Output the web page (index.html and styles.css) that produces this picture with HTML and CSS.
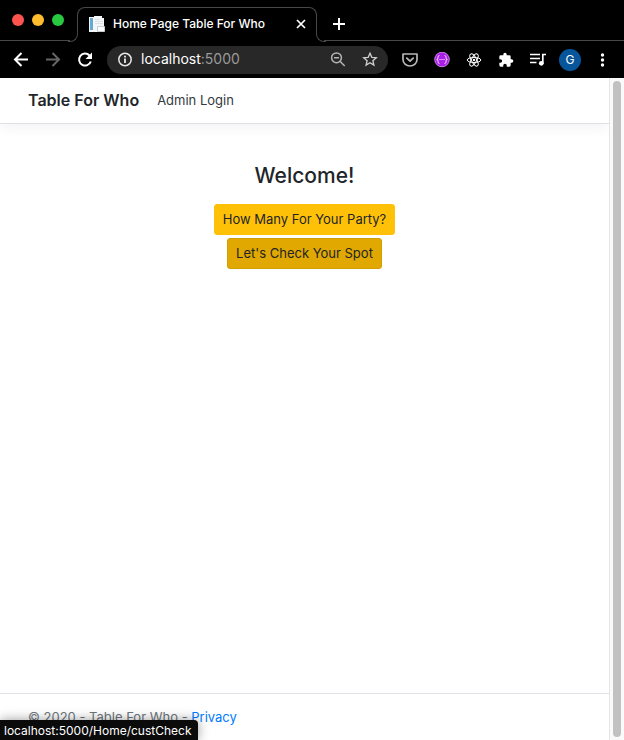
FILE: index.html
```html
<!DOCTYPE html>
<html lang="en">
<head>
<meta charset="utf-8">
<meta name="viewport" content="width=device-width, initial-scale=1">
<title>Home Page Table For Who</title>
<link rel="stylesheet" href="styles.css">
</head>
<body>
<div class="browser">
  <div class="tabstrip">
    <div class="window-controls">
      <button class="light light-red" aria-label="Close window"></button>
      <button class="light light-yellow" aria-label="Minimize window"></button>
      <button class="light light-green" aria-label="Zoom window"></button>
    </div>
    <div class="tab">
      <svg class="favicon" viewBox="0 0 16 16" aria-hidden="true">
        <path fill="#f4f6f7" d="M0 1h5V0h8v2h2v14H0z"/>
        <path fill="#65a9d4" d="M1 2h3v12H1z"/>
        <path fill="#dfe2e4" d="M6 3h5v1H6zM6 5h8v1H6zM6 7h8v1H6z"/>
        <path fill="#fff" stroke="#c9cdd1" d="M8.500 10.500h7v5h-7z"/>
      </svg>
      <span class="tab-title">Home Page Table For Who</span>
      <button class="tab-close" aria-label="Close tab">
        <svg class="icon-small" viewBox="0 0 12 12"><path fill="none" stroke="#fff" stroke-width="1.700" d="M2 2l8 8M10 2l-8 8"/></svg>
      </button>
    </div>
    <div class="tabstrip-rest">
      <button class="new-tab" aria-label="New tab">
        <svg class="icon-small" viewBox="0 0 12 12"><path stroke="#fff" stroke-width="2" d="M6 0v12M0 6h12"/></svg>
      </button>
    </div>
  </div>

  <div class="toolbar">
    <button class="tool" aria-label="Back"><svg class="icon" viewBox="0 0 16 16"><path fill="none" stroke="#fff" stroke-width="2" d="M15 7.500H2M8.500 1L2 7.500 8.500 14"/></svg></button>
    <button class="tool" aria-label="Forward"><svg class="icon" viewBox="0 0 16 16"><path fill="none" stroke="#666" stroke-width="2" d="M1 7.500h13M7.500 1L14 7.500 7.500 14"/></svg></button>
    <button class="tool" aria-label="Reload"><svg class="icon" viewBox="0 0 16 16"><path fill="none" stroke="#fff" stroke-width="2" d="M13.800 9.500A6 6 0 1 1 12.500 3.500"/><path fill="#fff" d="M15 .5V7H8.500z"/></svg></button>
    <div class="address">
      <svg class="icon" viewBox="0 0 16 16" aria-hidden="true"><circle cx="8" cy="7.500" r="6.200" fill="none" stroke="#e8e8e8" stroke-width="1.500"/><path stroke="#e8e8e8" stroke-width="1.800" d="M8 6.500V11M8 3.700v1.800"/></svg>
      <div class="url"><span class="host">localhost</span>:5000</div>
      <button class="tool" aria-label="Zoom level"><svg class="icon" viewBox="0 0 16 16"><circle cx="6.500" cy="5.800" r="4.900" fill="none" stroke="#b4b4b4" stroke-width="1.500"/><path fill="none" stroke="#b4b4b4" stroke-width="1.500" d="M10 9.300l4.700 4.700M4 5.800h5"/></svg></button>
      <button class="tool" aria-label="Bookmark this page"><svg class="icon" viewBox="0 0 16 16"><path fill="none" stroke="#d0d0d0" stroke-width="1.300" d="M8 1.200l1.800 4.100 4.500.4-3.400 3 1 4.400L8 10.800l-3.900 2.300 1-4.400-3.400-3 4.500-.4z"/></svg></button>
    </div>
    <button class="tool" aria-label="Save to Pocket"><svg class="icon" viewBox="0 0 16 16"><path fill="none" stroke="#b7b7b7" stroke-width="1.700" stroke-linejoin="round" d="M1 2h14v5.500a7 6.500 0 0 1-14 0z"/><path fill="none" stroke="#b7b7b7" stroke-width="1.800" stroke-linecap="round" stroke-linejoin="round" d="M4.800 6.200L8 9.200l3.200-3"/></svg></button>
    <button class="tool" aria-label="JSON viewer"><svg class="icon" viewBox="0 0 16 16"><circle cx="8" cy="7.500" r="7.500" fill="#a91de8"/><circle cx="8" cy="7.500" r="7.300" fill="none" stroke="#e6c4f5" stroke-width=".6"/><path fill="none" stroke="#fff" stroke-width=".8" d="M5.500 3.500Q4 3.500 4 5v1Q4 7.500 2.700 7.500 4 7.500 4 9v1q0 1.500 1.500 1.500M10.500 3.500Q12 3.500 12 5v1q0 1.500 1.300 1.500Q12 7.500 12 9v1q0 1.500-1.500 1.500"/><path fill="#fff" d="M5.500 7h1v1h-1zM7.500 7h1v1h-1zM9.500 7h1v1h-1z"/></svg></button>
    <button class="tool" aria-label="React developer tools"><svg class="icon" viewBox="0 0 16 16"><g fill="none" stroke="#fff" stroke-width="1"><ellipse cx="8" cy="8" rx="6.800" ry="2.600"/><ellipse cx="8" cy="8" rx="6.800" ry="2.600" transform="rotate(60 8 8)"/><ellipse cx="8" cy="8" rx="6.800" ry="2.600" transform="rotate(120 8 8)"/></g><circle cx="8" cy="8" r="1.200" fill="#fff"/></svg></button>
    <button class="tool" aria-label="Extensions"><svg class="icon" viewBox="0 0 24 24"><path fill="#fff" d="M20.500 11H19V7a2 2 0 0 0-2-2h-4V3.500a2.500 2.500 0 0 0-5 0V5H4a2 2 0 0 0-2 2v3.800h1.500a2.700 2.700 0 0 1 0 5.400H2V20a2 2 0 0 0 2 2h3.800v-1.500a2.700 2.700 0 0 1 5.400 0V22H17a2 2 0 0 0 2-2v-4h1.500a2.500 2.500 0 0 0 0-5z"/></svg></button>
    <button class="tool" aria-label="Media controls"><svg class="icon" viewBox="0 0 16 16"><path fill="none" stroke="#fff" stroke-width="1.700" d="M0 2.500h10M0 6.500h10M0 10.500h6.500M12.800 11.500v-9H16"/><circle cx="11.300" cy="11.300" r="2.400" fill="#fff"/></svg></button>
    <button class="tool" aria-label="Profile"><span class="avatar">G</span></button>
    <button class="tool" aria-label="Menu"><svg class="icon" viewBox="0 0 16 16"><g fill="#fff"><circle cx="8.500" cy="3" r="1.700"/><circle cx="8.500" cy="8" r="1.700"/><circle cx="8.500" cy="13" r="1.700"/></g></svg></button>
  </div>

  <div class="viewport">
    <div class="page">
      <header class="navbar">
        <a class="brand" href="#">Table For Who</a>
        <a class="nav-link" href="#">Admin Login</a>
      </header>
      <main class="content">
        <h1 class="heading">Welcome!</h1>
        <button class="action">How Many For Your Party?</button>
        <button class="action action-hover">Let's Check Your Spot</button>
      </main>
      <footer class="footer">© 2020 - Table For Who - <a class="footer-link" href="#">Privacy</a></footer>
    </div>
    <div class="scroll-track"><div class="scroll-thumb"></div></div>
  </div>
  <div class="status">localhost:5000/Home/custCheck</div>
</div>
</body>
</html>
```

FILE: styles.css
```css
* {
  box-sizing: border-box;
}

body {
  margin: 0;
  background: #000;
  font-family: Inter, "Liberation Sans", sans-serif;
  color: #212529;
}

button {
  margin: 0;
  padding: 0;
  border: 0;
  background: none;
  font: inherit;
  color: inherit;
}

a {
  text-decoration: none;
}

svg {
  display: block;
}

.browser {
  position: relative;
  display: flex;
  flex-direction: column;
  min-height: 100vh;
  overflow: hidden;
}

.tabstrip {
  display: flex;
  height: 41px;
}

.window-controls {
  display: flex;
  gap: 8px;
  width: 70px;
  padding: 14px 0 0 12px;
  border-bottom: 1px solid #484848;
}

.light {
  width: 12px;
  height: 12px;
  border-radius: 50%;
}

.light-red {
  background: #ff5350;
}

.light-yellow {
  background: #ffbd2e;
}

.light-green {
  background: #28c941;
}

.tab {
  position: relative;
  display: flex;
  align-items: center;
  width: 240px;
  height: 26px;
  margin: 7px 7px 0;
  padding: 7px 9px 0 11px;
  border: 1px solid #484848;
  border-bottom: 0;
  border-radius: 8px 8px 0 0;
}

.tab::before,
.tab::after {
  content: "";
  position: absolute;
  top: 25px;
  width: 9px;
  height: 8px;
  border-bottom: 1px solid #484848;
}

.tab::before {
  right: 238px;
  border-right: 1px solid #484848;
  border-bottom-right-radius: 8px;
}

.tab::after {
  left: 238px;
  border-left: 1px solid #484848;
  border-bottom-left-radius: 8px;
}

.favicon {
  width: 16px;
  height: 16px;
}

.tab-title {
  flex: 1;
  margin-left: 8px;
  font-size: 12px;
  font-weight: 500;
  line-height: 16px;
  color: #fff;
  white-space: nowrap;
}

.icon-small {
  width: 12px;
  height: 12px;
}

.tabstrip-rest {
  display: flex;
  align-items: flex-start;
  flex: 1;
  padding: 18px 0 0 9px;
  border-bottom: 1px solid #484848;
}

.toolbar {
  display: flex;
  align-items: center;
  height: 37px;
  padding: 0 6px 0 5px;
}

.tool {
  display: flex;
  flex: none;
  align-items: center;
  justify-content: center;
  width: 32px;
  height: 28px;
}

.icon {
  width: 16px;
  height: 16px;
}

.address {
  display: flex;
  flex: 1;
  align-items: center;
  height: 28px;
  margin: 0 6px;
  padding: 0 2px 0 10px;
  border-radius: 14px;
  background: #282828;
}

.url {
  flex: 1;
  margin-left: 8px;
  padding-bottom: 2px;
  font-size: 14px;
  line-height: 20px;
  color: #9a9a9a;
}

.host {
  color: #fff;
}

.avatar {
  width: 22px;
  border-radius: 50%;
  background: #07569b;
  color: #fff;
  font-size: 12px;
  line-height: 22px;
  text-align: center;
}

.viewport {
  display: flex;
  flex: 1;
  background: #fff;
}

.page {
  display: flex;
  flex: 1;
  flex-direction: column;
}

.navbar {
  display: flex;
  align-items: center;
  gap: 18px;
  height: 46px;
  padding: 0 28px 2px;
  border-bottom: 1px solid #dee2e6;
  box-shadow: 0 4px 12px rgba(0, 0, 0, 0.05);
}

.brand {
  font-size: 16px;
  font-weight: 600;
  line-height: 24px;
  color: #212529;
}

.nav-link {
  font-size: 13px;
  line-height: 20px;
  color: #343a40;
}

.content {
  display: flex;
  flex: 1;
  flex-direction: column;
  align-items: center;
  gap: 3px;
  padding-top: 38px;
}

.heading {
  margin: 0 0 12px;
  font-size: 21px;
  font-weight: 500;
  line-height: 27px;
}

.action {
  height: 31px;
  padding: 0 8px 2px;
  border: 1px solid #ffc107;
  border-radius: 3px;
  background: #ffc107;
  font-size: 13px;
}

.action-hover {
  border-color: #d39e00;
  background: #e0a800;
}

.footer {
  height: 47px;
  padding: 13px 28px 0;
  border-top: 1px solid #dee2e6;
  font-size: 13px;
  line-height: 20px;
  color: #6c757d;
}

.footer-link {
  color: #007bff;
}

.scroll-track {
  display: flex;
  width: 15px;
  padding: 3px;
  border-left: 1px solid #e5e5e5;
  background: #fafafa;
}

.scroll-thumb {
  width: 8px;
  border-radius: 4px;
  background: #c1c1c1;
}

.status {
  position: absolute;
  bottom: 0;
  left: 0;
  padding: 2px 6px 0 4px;
  border-top-right-radius: 4px;
  background: #0b0b0b;
  box-shadow: 0 0 12px rgba(0, 0, 0, 0.4);
  font-size: 12px;
  line-height: 18px;
  color: #fff;
}
```
